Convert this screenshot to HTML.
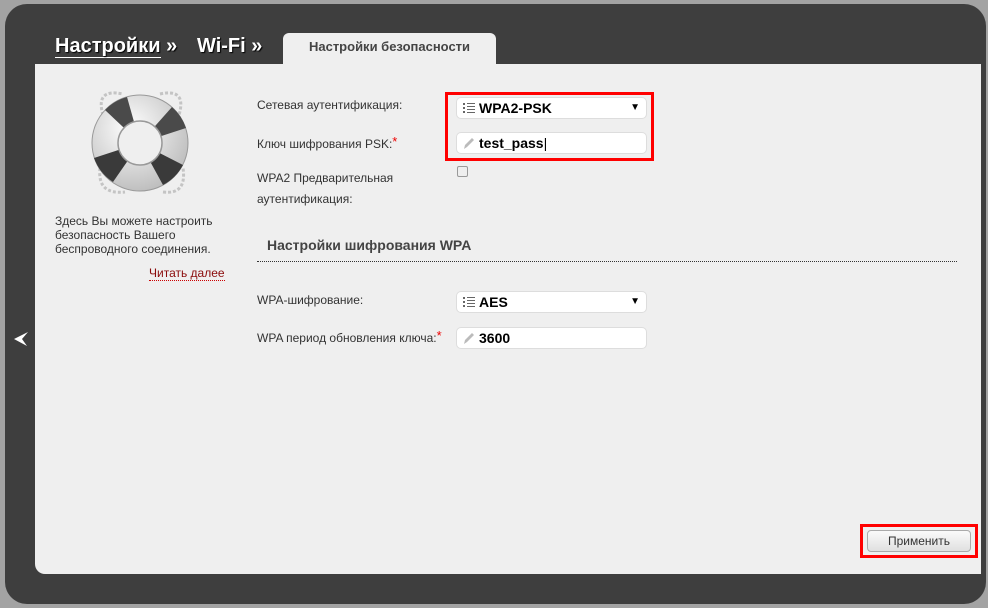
<!DOCTYPE html>
<html><head><meta charset="utf-8"><style>
*{margin:0;padding:0;box-sizing:border-box}
body{width:988px;height:608px;background:#a3a3a3;font-family:"Liberation Sans",Arial,sans-serif;position:relative;overflow:hidden}
.frame{position:absolute;left:5px;top:4px;width:981px;height:600px;background:#3e3e3e;border-radius:22px}
.content{position:absolute;left:35px;top:64px;width:946px;height:510px;background:#efefef;border-radius:0 0 0 10px}
.crumb{position:absolute;top:35px;color:#fff;font-weight:bold;font-size:20px;text-shadow:1px 1px 1px #000}
.tab{position:absolute;left:283px;top:33px;width:213px;height:32px;background:#efefef;border-radius:6px 6px 0 0;text-align:center;line-height:28px;font-size:13px;font-weight:bold;color:#444}
.lbl{position:absolute;left:257px;font-size:12px;color:#333}
.req{color:#e00;font-size:13px;vertical-align:top;position:relative;top:-3px}
.field{position:absolute;left:456px;width:191px;height:22px;background:#fff;border:1px solid #ddd;border-radius:5px;font-size:14px;font-weight:bold;color:#000;line-height:20px;padding-left:22px}
.arrow{position:absolute;right:6px;top:0;font-size:10px}
.list{position:absolute;left:6px;top:5px;width:12px;height:11px}
.red{position:absolute;border:3px solid #f00}
</style></head><body>
<div class="frame"></div>
<div class="crumb" style="left:55px;"><span style="border-bottom:1px solid #fff">Настройки</span> »</div>
<div class="crumb" style="left:197px;">Wi-Fi »</div>
<div class="tab">Настройки безопасности</div>
<div class="content"></div>
<svg style="position:absolute;left:13px;top:331px" width="16" height="16"><path d="M15 1 L1 8 L14 15 L9 8 Z" fill="#fff"/></svg>
<svg style="position:absolute;left:75px;top:80px" width="130" height="125" viewBox="0 0 130 125">
<defs><radialGradient id="g" cx="0.4" cy="0.35" r="0.7"><stop offset="0" stop-color="#fff"/><stop offset="1" stop-color="#bbb"/></radialGradient></defs>
<path d="M28 35 Q20 8 48 14 M85 14 Q112 8 104 35 M25 88 Q22 115 50 112 M88 112 Q112 115 108 88" stroke="#c4c4c4" stroke-width="3" fill="none" stroke-dasharray="3 2"/>
<circle cx="65" cy="63" r="48" fill="url(#g)" stroke="#999" stroke-width="1"/>
<path d="M65 63 L30 30 A48 48 0 0 1 52 17 Z" fill="#4a4a4a"/>
<path d="M65 63 L97 27 A48 48 0 0 1 111 48 Z" fill="#4a4a4a"/>
<path d="M65 63 L108 85 A48 48 0 0 1 88 105 Z" fill="#3a3a3a"/>
<path d="M65 63 L38 102 A48 48 0 0 1 19 78 Z" fill="#3a3a3a"/>
<circle cx="65" cy="63" r="22" fill="#efefef" stroke="#999" stroke-width="1.5"/>
</svg>
<div style="position:absolute;left:55px;top:214px;font-size:12px;color:#333;line-height:14px">Здесь Вы можете настроить<br>безопасность Вашего<br>беспроводного соединения.</div>
<div style="position:absolute;left:149px;top:266px;font-size:12px;color:#8a0a0a;border-bottom:1px dotted #c00">Читать далее</div>

<div class="lbl" style="top:98px">Сетевая аутентификация:</div>
<div class="lbl" style="top:137px">Ключ шифрования PSK:<span class="req">*</span></div>
<div class="lbl" style="top:168px;line-height:21px">WPA2 Предварительная<br>аутентификация:</div>
<div style="position:absolute;left:457px;top:166px;width:11px;height:11px;border:1px solid #999;border-radius:2px;background:#eee"></div>
<div style="position:absolute;left:267px;top:237px;font-size:14px;font-weight:bold;color:#444">Настройки шифрования WPA</div>
<div style="position:absolute;left:257px;top:261px;width:700px;border-top:1px dotted #333"></div>
<div class="lbl" style="top:293px">WPA-шифрование:</div>
<div class="lbl" style="top:331px">WPA период обновления ключа:<span class="req">*</span></div>

<div class="field" style="top:97px">WPA2-PSK<span class="arrow">▼</span>
<svg class="list" viewBox="0 0 12 11"><g fill="#666"><rect x="0" y="0" width="2" height="2"/><rect x="0" y="4" width="2" height="2"/><rect x="0" y="8" width="2" height="2"/><rect x="4" y="0" width="8" height="1"/><rect x="4" y="3" width="8" height="1"/><rect x="4" y="6" width="8" height="1"/><rect x="4" y="9" width="8" height="1"/></g></svg></div>
<div class="field" style="top:132px">test_pass<span style="font-weight:normal">|</span>
<svg style="position:absolute;left:5px;top:4px" width="12" height="13"><path d="M2 12 L3 8 L10 1 L12 3 L5 10 Z" fill="#bbb"/></svg></div>
<div class="field" style="top:291px">AES<span class="arrow">▼</span>
<svg class="list" viewBox="0 0 12 11"><g fill="#666"><rect x="0" y="0" width="2" height="2"/><rect x="0" y="4" width="2" height="2"/><rect x="0" y="8" width="2" height="2"/><rect x="4" y="0" width="8" height="1"/><rect x="4" y="3" width="8" height="1"/><rect x="4" y="6" width="8" height="1"/><rect x="4" y="9" width="8" height="1"/></g></svg></div>
<div class="field" style="top:327px">3600
<svg style="position:absolute;left:5px;top:4px" width="12" height="13"><path d="M2 12 L3 8 L10 1 L12 3 L5 10 Z" fill="#bbb"/></svg></div>

<div class="red" style="left:445px;top:92px;width:209px;height:69px"></div>
<div style="position:absolute;left:867px;top:530px;width:104px;height:22px;background:linear-gradient(#fafafa,#e0e0e0);border:1px solid #aaa;border-radius:4px;text-align:center;font-size:12px;line-height:20px;color:#333">Применить</div>
<div class="red" style="left:860px;top:524px;width:118px;height:34px"></div>
</body></html>
